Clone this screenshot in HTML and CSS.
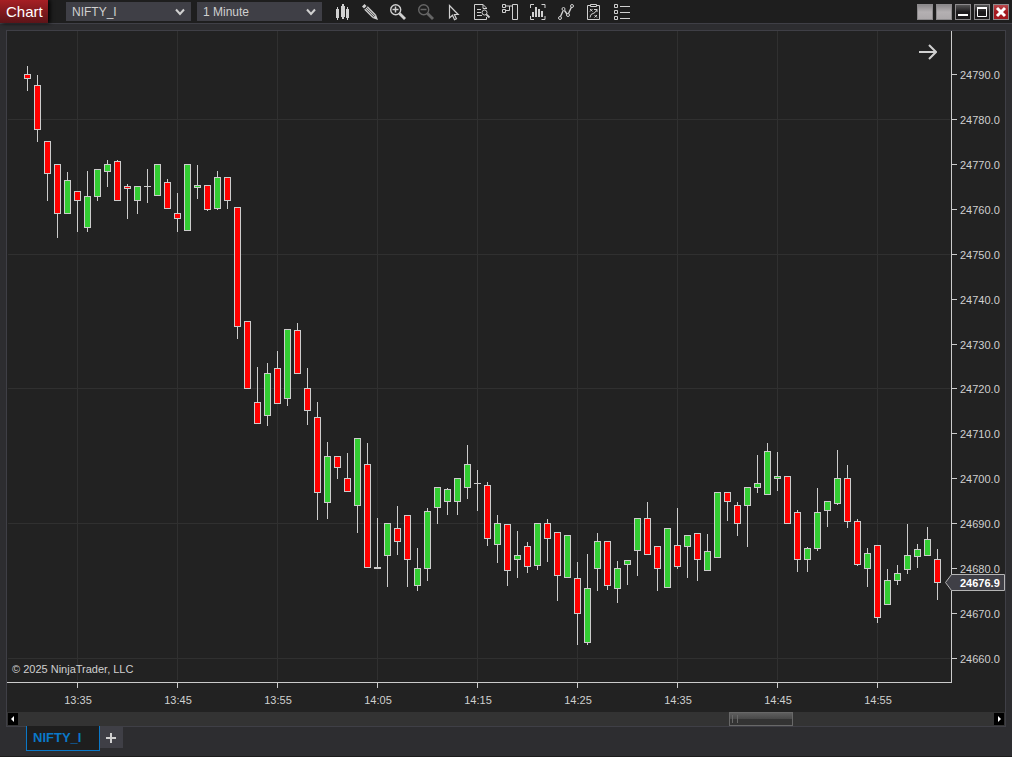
FILE: index.html
```html
<!DOCTYPE html>
<html lang="en">
<head>
<meta charset="UTF-8">
<meta name="viewport" content="width=device-width, initial-scale=1.0">
<title>Chart - NIFTY_I</title>
<link rel="stylesheet" href="styles.css">
</head>
<body>
<header class="titlebar">
    <h1 class="title">Chart</h1>
    <div class="picker">
        <select class="picker-select" aria-label="Instrument">
            <option>NIFTY_I</option>
        </select>
        <svg class="picker-arrow" width="10" height="8" viewBox="0 0 10 8"><path d="M1 1.5L5 6L9 1.5"/></svg>
    </div>
    <div class="picker">
        <select class="picker-select" aria-label="Interval">
            <option>1 Minute</option>
        </select>
        <svg class="picker-arrow" width="10" height="8" viewBox="0 0 10 8"><path d="M1 1.5L5 6L9 1.5"/></svg>
    </div>
    <div class="tools">
        <button class="tool" aria-label="Chart style">
            <svg viewBox="0 0 16 16"><path class="solid" d="M2 5h1V3h1v2h1v9H4v2H3v-2H2zM7 2h1V0h2v2h1v11h-1v2H8v-2H7zM12 5h1V3h1v2h1v9h-1v2h-1v-2h-1z"/></svg>
        </button>
        <button class="tool" aria-label="Drawing tools">
            <svg viewBox="0 0 16 16"><path class="solid" d="M0 2.5L2.5 0L4.5 2L2 4.5zM10.5 14L14 10.5L16 16z"/><path d="M2.7 5.3L11 13.5M5.3 2.7L13.5 11" stroke-width="1.3"/><path d="M4 4L12.2 12.2" stroke-width="1.1"/></svg>
        </button>
        <button class="tool" aria-label="Zoom in">
            <svg viewBox="0 0 16 16"><circle cx="5.7" cy="5.7" r="5" stroke-width="1.4"/><path d="M2.500 5.500h6M5.500 2.500v6" stroke-width="1.5"/><path d="M9.500 9.500L15 15" stroke-width="2.8"/></svg>
        </button>
        <button class="tool" aria-label="Zoom out" disabled>
            <svg viewBox="0 0 16 16"><circle cx="5.7" cy="5.7" r="5" stroke-width="1.4"/><path d="M2.500 5.500h6" stroke-width="1.5"/><path d="M9.500 9.500L15 15" stroke-width="2.8"/></svg>
        </button>
        <button class="tool" aria-label="Pointer">
            <svg viewBox="0 0 16 16"><path d="M3.500 1.500v12.500l3-2.700l2 4.400l1.900-.9l-2-4.300h3.800z" stroke-width="1.200"/></svg>
        </button>
        <button class="tool" aria-label="Data box">
            <svg viewBox="0 0 16 16"><path d="M12.5 5V4L9 .5H.5v15h12V13M9 .5v4h3.5M3 5.5h4M3 8.5h4M3 11.5h5"/><circle cx="10.5" cy="8.5" r="2.5"/><path d="M12.3 10.3L15.5 13.5" stroke-width="1.8"/></svg>
        </button>
        <button class="tool" aria-label="Chart trader">
            <svg viewBox="0 0 16 16"><path d="M.5 .5h3v3h-3zM.5 5.5h3v3h-3zM10.5 .5h5v15h-5zM4 2h6M4 6.500h3.500V2"/></svg>
        </button>
        <button class="tool" aria-label="Indicators">
            <svg viewBox="0 0 16 16"><path d="M.5 4V.5H4M11.500 .5h3.500V4M.5 12v3.500H4M11.500 15.500h3.500V12"/><path class="solid" d="M2 8h2v5H2zM5 3h2v10H5zM8 5h2v8H8zM11 7h2v6h-2z"/></svg>
        </button>
        <button class="tool" aria-label="Strategies">
            <svg viewBox="0 0 16 16"><path d="M2.500 12.500L5 7M6.500 6.500L9 10M10.500 9.500L13.500 3" stroke-width="1.400"/><circle cx="2" cy="14" r="1.500"/><circle cx="5.500" cy="5" r="1.500"/><circle cx="10" cy="11" r="1.500"/><circle cx="14" cy="2" r="1.500"/></svg>
        </button>
        <button class="tool" aria-label="Strategy analyzer">
            <svg viewBox="0 0 16 16"><path d="M4 1.500H1.500v14h12v-14H11M4.500 .5h6v2h-6zM4 5l2.500 2.500M6.500 5L4 7.500M8.500 11l2.500 2.500M11 11l-2.500 2.500"/><path d="M4 13.500l1-3l4-2l2-3M8 5.500h3V8"/></svg>
        </button>
        <button class="tool" aria-label="Properties">
            <svg viewBox="0 0 16 16"><path d="M.5 .5h3v3h-3zM.5 6.500h3v3h-3zM.5 12.500h3v3h-3zM6 2.500h10M6 8.500h10M6 14.500h10"/></svg>
        </button>
    </div>
    <div class="window-buttons">
        <button class="win blank" aria-label="Instrument link"></button>
        <button class="win blank" aria-label="Interval link"></button>
        <button class="win dark" aria-label="Minimize">
            <svg viewBox="0 0 14 14"><path d="M2 10h10" stroke-width="2"/></svg>
        </button>
        <button class="win dark" aria-label="Maximize">
            <svg viewBox="0 0 14 14"><path d="M2.500 3v8.500h9V3"/><path d="M2 3h10" stroke-width="2"/></svg>
        </button>
        <button class="win close" aria-label="Close">
            <svg viewBox="0 0 14 14"><path d="M3 3L11 11M11 3L3 11" stroke-width="3"/></svg>
        </button>
    </div>
</header>
<main class="workspace">
    <section class="panel">
        <div class="chart">
            <svg id="chart" class="chart-svg" role="img" aria-label="NIFTY_I 1 minute candles"></svg>
            <button class="goto-last" aria-label="Go to last bar">
                <svg width="18" height="16" viewBox="0 0 18 16"><path d="M0 8h17M10 1l7 7l-7 7"/></svg>
            </button>
        </div>
        <div class="scroll">
            <button class="scroll-arrow" aria-label="Scroll left">
                <svg width="10" height="12" viewBox="0 0 10 12"><path d="M6 3v6L3 6z"/></svg>
            </button>
            <div class="scroll-track">
                <div class="scroll-thumb"></div>
            </div>
            <button class="scroll-arrow" aria-label="Scroll right">
                <svg width="10" height="12" viewBox="0 0 10 12"><path d="M4 3v6L7 6z"/></svg>
            </button>
        </div>
    </section>
    <nav class="tabs">
        <a class="tab" href="#">NIFTY_I</a>
        <button class="tab-add" aria-label="Add tab">
            <svg width="10" height="10" viewBox="0 0 10 10"><path d="M0 5h10M5 0v10"/></svg>
        </button>
    </nav>
</main>
<script src="chart.js"></script>
</body>
</html>
```

FILE: styles.css
```css
* {
    box-sizing: border-box;
}
body {
    margin: 0;
    height: 100vh;
    display: flex;
    flex-direction: column;
    overflow: hidden;
    background-color: #2d2d30;
    border-bottom: 1px solid #1c1c1c;
    color: #d0d0d0;
    font-family: "Liberation Sans", Arial, sans-serif;
    font-size: 12px;
}
button {
    border: 0;
    padding: 0;
    background: none;
    color: inherit;
    cursor: pointer;
}
svg {
    display: block;
}

/* title bar */
.titlebar {
    display: flex;
    align-items: center;
    height: 24px;
    flex: none;
    background-color: #1e1e1e;
    border-bottom: 1px solid #3f3f46;
}
.title {
    margin: 0 18px 0 0;
    padding: 0 6px;
    width: 48px;
    height: 23px;
    line-height: 24px;
    font-size: 15px;
    font-weight: normal;
    color: #ffffff;
    background: linear-gradient(#a61f24, #5c1418);
    box-shadow: 2px 0 4px #000000;
}
.picker {
    display: grid;
    width: 125px;
    height: 19px;
    margin-right: 6px;
}
.picker-select {
    grid-area: 1 / 1;
    appearance: none;
    border: 0;
    border-radius: 0;
    padding: 0 20px 0 6px;
    background-color: #3f3f46;
    color: #d0d0d0;
    font-family: inherit;
    font-size: 12px;
}
.picker-arrow {
    grid-area: 1 / 1;
    justify-self: end;
    align-self: center;
    margin-right: 6px;
    pointer-events: none;
    fill: none;
    stroke: #d0d0d0;
    stroke-width: 2;
}
.tools {
    display: flex;
    gap: 12px;
    margin-left: 6px;
}
.tool {
    width: 16px;
    height: 16px;
}
.tool svg {
    width: 16px;
    height: 16px;
    overflow: visible;
    fill: none;
    stroke: #d0d0d0;
}
.tool .solid {
    fill: #d0d0d0;
    stroke: none;
}
.tool:disabled {
    opacity: 0.4;
}
.window-buttons {
    display: flex;
    gap: 3px;
    margin-left: auto;
    padding-right: 3px;
}
.win {
    width: 16px;
    height: 16px;
    border: 1px solid #8c8a8c;
}
.win svg {
    width: 14px;
    height: 14px;
    fill: none;
    stroke: #ffffff;
}
.blank {
    background: linear-gradient(#8a888a, #b4b0b2 50%, #aca8aa);
}
.dark {
    background: linear-gradient(#555555, #1c1a1c 50%);
}
.close {
    background: linear-gradient(#b8494d, #a3181e 50%);
}

/* chart panel */
.workspace {
    flex: 1;
    min-height: 0;
    display: flex;
    flex-direction: column;
    padding: 6px 6px 5px;
}
.panel {
    flex: 1;
    min-height: 0;
    display: flex;
    flex-direction: column;
    border: 1px solid #3f3f46;
    background-color: #222222;
}
.chart {
    flex: 1;
    min-height: 0;
    position: relative;
    overflow: hidden;
}
.chart-svg {
    width: 100%;
    height: 100%;
}
.chart-svg text {
    fill: #d0d0d0;
    font-size: 11px;
}
.chart-svg .middle {
    text-anchor: middle;
}
.grid {
    fill: #303030;
}
.axis, .wick {
    fill: #cccccc;
}
.up, .down {
    stroke: #cccccc;
}
.up {
    fill: #32cd32;
}
.down {
    fill: #ff0000;
}
.marker {
    fill: #3f3f46;
    stroke: #b4b4b4;
}
.chart-svg .marker-text {
    fill: #ffffff;
    font-weight: bold;
}
.goto-last {
    position: absolute;
    top: 13px;
    right: 68px;
}
.goto-last path {
    fill: none;
    stroke: #d0d0d0;
    stroke-width: 2;
}

.scroll {
    display: flex;
    align-items: center;
    height: 14px;
    flex: none;
    padding: 0 1px;
    background-color: #333333;
}
.scroll-arrow {
    width: 10px;
    height: 12px;
    background-color: #000000;
}
.scroll-arrow path {
    fill: #ffffff;
}
.scroll-track {
    flex: 1;
    display: flex;
    justify-content: flex-end;
    padding-right: 201px;
}
.scroll-thumb {
    width: 64px;
    height: 14px;
    border: 1px solid #686868;
    background: linear-gradient(#5e5e5e, #484848 50%, #333333 50%);
}
.scroll-thumb::before {
    content: "";
    display: block;
    width: 4px;
    height: 8px;
    margin: 2px;
    border: solid #686868;
    border-width: 0 1px;
}

/* tabs */
.tabs {
    display: flex;
    margin-top: -1px;
    padding-left: 20px;
}
.tab {
    width: 74px;
    height: 25px;
    padding-left: 6px;
    border: 1px solid #0a78c8;
    border-top: 0;
    background-color: #1e1e1e;
    color: #0a78c8;
    font-size: 13px;
    font-weight: bold;
    line-height: 23px;
    text-decoration: none;
}
.tab-add {
    width: 23px;
    height: 21px;
    margin-top: 1px;
    padding-left: 6px;
    background-color: #3f3f46;
}
.tab-add path {
    stroke: #d0d0d0;
    stroke-width: 2;
}
```

FILE: chart.js
```js
// one bar per minute: high, body top, body bottom, low, direction (u = up, d = down)
const bars = `
66 74 79 91 d|75 85 130 142 d|141 141 174 201 d|164 164 214 238 d|172 180 214 214 u
191 191 201 232 d|171 196 228 232 u|169 169 197 201 u|160 164 172 187 u|160 161 201 201 d
184 186 189 219 d|186 186 201 214 u|169 186 187 203 u|164 164 196 196 u|179 182 209 209 d
193 213 219 232 d|164 164 231 231 u|165 185 188 199 u|185 185 210 211 d|171 177 209 210 u
177 177 201 209 d|207 207 327 339 d|321 321 389 389 d|367 402 424 424 d|363 373 416 426 u
351 368 404 404 d|329 329 399 406 u|323 330 374 374 d|368 388 411 425 d|402 417 493 520 d
442 456 503 519 u|456 456 468 479 d|453 478 492 492 d|438 438 506 533 u|443 464 568 568 d
518 567 569 569 u|523 523 556 587 u|506 528 542 555 d|515 515 560 587 d|548 568 586 591 u
508 511 569 581 u|487 487 508 524 u|488 489 502 515 u|478 478 502 515 u|445 464 488 499 u
470 483 484 511 u|482 485 539 546 d|515 523 545 563 u|524 524 571 586 d|531 555 560 578 u
542 546 567 573 d|523 523 566 570 u|519 523 539 562 d|532 532 576 601 d|535 535 578 578 u
562 578 614 645 d|554 588 643 645 u|533 541 569 591 u|541 541 586 590 d|561 568 589 603 u
560 560 565 585 u|518 518 551 576 u|502 518 555 555 d|546 546 569 591 d|528 528 588 588 u
508 545 567 569 d|535 535 547 578 u|533 533 560 581 d|534 551 571 571 u|492 492 558 558 u
492 492 502 521 d|502 505 524 536 d|487 487 506 547 u|455 483 488 493 u|443 451 495 495 u
452 476 479 491 u|476 476 524 524 d|510 512 560 572 d|547 548 560 572 u|488 512 549 551 u
501 501 511 527 u|450 478 504 505 u|465 478 522 528 d|519 521 565 566 d|548 553 569 587 u
545 545 618 623 d|569 580 605 605 u|565 573 581 585 u|524 555 570 574 u|544 549 557 568 u
527 539 556 556 u|549 559 583 600 d`.trim().split(/[|\n]/).map(row => row.split(' '));

const times = ['13:35', '13:45', '13:55', '14:05', '14:15', '14:25', '14:35', '14:45', '14:55'];
const svg = document.getElementById('chart');

function rect(cls, x, y, w, h) {
    return `<rect class="${cls}" x="${x}" y="${y}" width="${w}" height="${h}"/>`;
}

function draw() {
    const right = svg.clientWidth - 54;
    const bottom = svg.clientHeight - 30;
    const scale = v => Math.round((v - 31) * bottom / 651);
    const barX = i => right - 14 - (bars.length - 1 - i) * 10;
    const priceY = p => scale(74 + (24790 - p) * 584 / 130);
    let out = '';

    for (let p = 24780; p >= 24660; p -= 30) {
        out += rect('grid', 1, priceY(p), right - 2, 1);
    }
    times.forEach((t, i) => {
        const x = barX(5 + i * 10);
        out += rect('grid', x, 0, 1, bottom - 2);
        out += rect('axis', x, bottom + 1, 1, 5);
        out += `<text class="middle" x="${x + 1}" y="${bottom + 22}">${t}</text>`;
    });
    out += `<text x="5" y="${bottom - 9}">© 2025 NinjaTrader, LLC</text>`;

    bars.forEach((b, i) => {
        const x = barX(i);
        const [high, top, base, low] = b.slice(0, 4).map(scale);
        out += rect('wick', x, high, 1, low - high);
        if (base - top < 3) {
            out += rect('wick', x - 3, top, 7, base - top);
        } else {
            out += rect(b[4] === 'u' ? 'up' : 'down', x - 2.5, top + 0.5, 6, base - top - 1);
        }
    });

    out += rect('axis', right, 0, 1, bottom + 1);
    out += rect('axis', 0, bottom, right + 1, 1);
    for (let p = 24790; p >= 24660; p -= 10) {
        out += rect('axis', right + 1, priceY(p), 5, 1);
        out += `<text x="${right + 9}" y="${priceY(p) + 5}">${p}.0</text>`;
    }

    // last price marker
    const y = priceY(24676.9);
    out += `<path class="marker" d="M${right - 5.5} ${y + 0.5}l6 -8h53v16h-53z"/>`;
    out += `<text class="marker-text" x="${right + 9}" y="${y + 5}">24676.9</text>`;
    svg.innerHTML = out;
}

draw();
window.addEventListener('resize', draw);
```
